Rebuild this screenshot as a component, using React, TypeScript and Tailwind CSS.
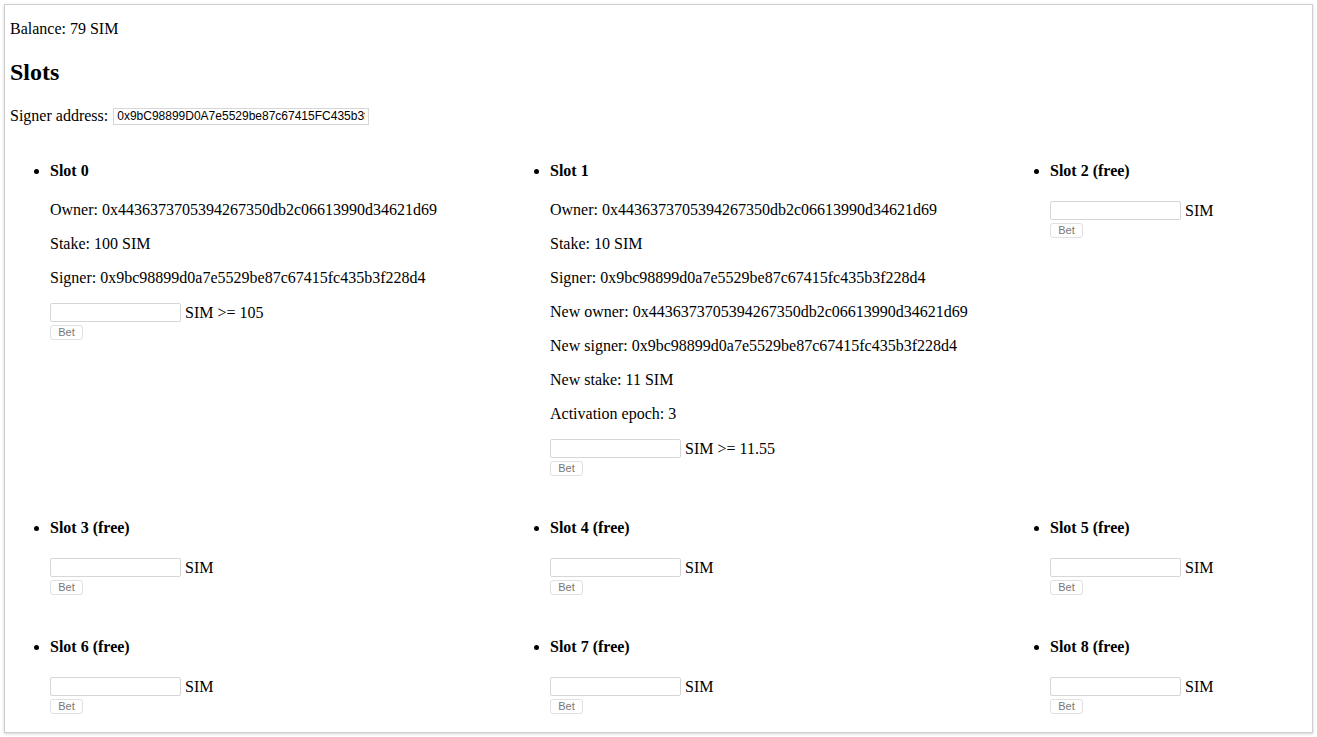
const OWNER = '0x4436373705394267350db2c06613990d34621d69';
const SIGNER = '0x9bc98899d0a7e5529be87c67415fc435b3f228d4';

type Slot = {
  id: number;
  free?: boolean;
  details?: string[];
  min?: string;
};

const slots: Slot[] = [
  {
    id: 0,
    details: [`Owner: ${OWNER}`, 'Stake: 100 SIM', `Signer: ${SIGNER}`],
    min: '105',
  },
  {
    id: 1,
    details: [
      `Owner: ${OWNER}`,
      'Stake: 10 SIM',
      `Signer: ${SIGNER}`,
      `New owner: ${OWNER}`,
      `New signer: ${SIGNER}`,
      'New stake: 11 SIM',
      'Activation epoch: 3',
    ],
    min: '11.55',
  },
  { id: 2, free: true },
  { id: 3, free: true },
  { id: 4, free: true },
  { id: 5, free: true },
  { id: 6, free: true },
  { id: 7, free: true },
  { id: 8, free: true },
];

function SlotItem({ slot }: { slot: Slot }) {
  return (
    <ul className="list-disc pl-[40px]">
      <li>
        <h4 className="font-bold leading-[18px] mb-[21px]">
          Slot {slot.id}
          {slot.free && ' (free)'}
        </h4>
        {slot.details?.map((line) => (
          <p key={line} className="leading-[18px] mb-[16px]">
            {line}
          </p>
        ))}
        <div className="flex items-center h-[19px] leading-[18px]">
          <input
            type="text"
            className="w-[131px] h-[19px] border border-[#d6d6d6] rounded-[2px] bg-white outline-none"
          />
          <span className="ml-[4px]">SIM{slot.min && ` >= ${slot.min}`}</span>
        </div>
        <button
          type="button"
          className="mt-[3px] h-[15px] w-[33px] flex items-center justify-center border border-[#e0e0e0] rounded-[3px] bg-white text-[11px] leading-none text-[#777] font-['Liberation_Sans',Arial,sans-serif]"
        >
          Bet
        </button>
      </li>
    </ul>
  );
}

export default function App() {
  return (
    <div className="bg-white w-[1317px] h-[737px] p-[4px] font-['Liberation_Serif','Times_New_Roman',serif] text-[16px] text-black">
      <div className="h-[729px] border border-[#cfcfcf] shadow-[0_1px_3px_rgba(0,0,0,0.18)] pl-[5px] pt-[15px]">
        <p className="leading-[18px]">Balance: 79 SIM</p>

        <h2 className="mt-[20px] text-[24px] font-bold leading-[28px]">Slots</h2>

        <p className="mt-[21px] flex items-center leading-[18px]">
          Signer address:
          <input
            type="text"
            readOnly
            value="0x9bC98899D0A7e5529be87c67415FC435b3f228d4"
            className="ml-[5px] w-[256px] h-[17px] px-[3px] border border-[#d6d6d6] bg-white text-[12px] font-['Liberation_Sans',Arial,sans-serif] outline-none"
          />
        </p>

        {/* slot grid, three per row */}
        <div className="mt-[34px] grid grid-cols-[500px_500px_1fr] gap-y-[40px]">
          {slots.map((s) => (
            <SlotItem key={s.id} slot={s} />
          ))}
        </div>
      </div>
    </div>
  );
}
